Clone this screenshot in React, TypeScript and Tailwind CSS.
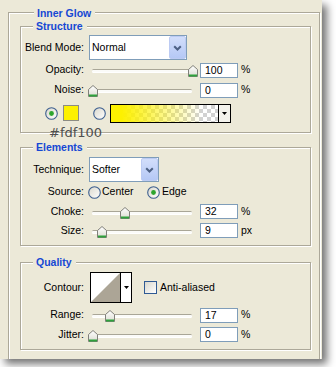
import React from "react";

function Legend({ children, className = "" }: { children: React.ReactNode; className?: string }) {
  return (
    <div
      className={`-mt-[8px] w-fit pl-[3px] pr-[4px] bg-[#ece9d8] text-[10.5px] font-bold leading-[14px] text-[#1548d4] ${className}`}
    >
      {children}
    </div>
  );
}

function Label({ children }: { children: React.ReactNode }) {
  return <div className="w-[63px] shrink-0 text-right text-[10.5px] text-black">{children}</div>;
}

function Thumb() {
  return (
    <svg width="10" height="12" viewBox="0 0 10 12">
      <defs>
        <linearGradient id="thumbg" x1="0" y1="0" x2="0" y2="1">
          <stop offset="0" stopColor="#ffffff" />
          <stop offset="1" stopColor="#dcdcd2" />
        </linearGradient>
      </defs>
      <path d="M0.5 4.5 L5 0.5 L9.5 4.5 V11.5 H0.5 Z" fill="url(#thumbg)" stroke="#80807a" />
      <rect x="1" y="9.5" width="8" height="2" fill="#2fa13c" />
    </svg>
  );
}

function Slider({ x }: { x: number }) {
  return (
    <div className="relative ml-[3px] h-full w-[110px] shrink-0">
      <div className="absolute left-[5px] right-[5px] top-[9px] h-[3px] rounded-full border-t border-[#a9a697] bg-[#fbfbf8] shadow-[0_1px_0_#ffffff]" />
      <div className="absolute top-[5px]" style={{ left: x - 87 }}>
        <Thumb />
      </div>
    </div>
  );
}

function Field({ value, unit }: { value: string; unit: string }) {
  return (
    <>
      <div className="ml-[3px] flex h-[15px] w-[38px] shrink-0 items-center border border-[#7f9db9] bg-white pl-[4px] text-[10.5px] leading-[13px] text-black">
        {value}
      </div>
      <div className="ml-[3px] text-[10.5px] text-black">{unit}</div>
    </>
  );
}

function Chevron() {
  return (
    <svg width="9" height="6" viewBox="0 0 9 6">
      <path d="M1.2 1.2 L4.5 4.5 L7.8 1.2" stroke="#4d6185" strokeWidth="2" fill="none" />
    </svg>
  );
}

function Select({ text, className }: { text: string; className: string }) {
  return (
    <div className={`ml-[5px] flex h-[25px] shrink-0 items-center border border-[#7f9db9] bg-white ${className}`}>
      <div className="pl-[2px] text-[10.5px] text-black">{text}</div>
      <div className="ml-auto flex h-[23px] w-[17px] items-center justify-center rounded-[2px] border border-[#bccbf3] bg-linear-to-b from-[#d2defb] to-[#b5c8f5]">
        <Chevron />
      </div>
    </div>
  );
}

function Radio({ checked }: { checked?: boolean }) {
  return (
    <svg width="13" height="13" viewBox="0 0 13 13" className="shrink-0">
      <defs>
        <linearGradient id="radiog" x1="0" y1="0" x2="1" y2="1">
          <stop offset="0" stopColor="#d9d7cc" />
          <stop offset="1" stopColor="#ffffff" />
        </linearGradient>
      </defs>
      <circle cx="6.5" cy="6.5" r="5.8" fill="url(#radiog)" stroke="#3d5f8f" strokeWidth="1.1" />
      {checked && <circle cx="6.5" cy="6.5" r="2.4" fill="#2ea52e" />}
    </svg>
  );
}

function DownTri() {
  return (
    <svg width="5" height="3" viewBox="0 0 5 3">
      <path d="M0 0 H5 L2.5 3 Z" fill="#000000" />
    </svg>
  );
}

const groupCls =
  "border border-[#aca899] shadow-[inset_1px_1px_0_#ffffff,1px_1px_0_#ffffff]";

export default function App() {
  return (
    <div className="h-[367px] w-[336px] overflow-hidden bg-white font-['Liberation_Sans',Arial,sans-serif]">
      <div className="h-[359px] w-[322px] overflow-hidden bg-[#ece9d8] pl-[8px] pt-[12px] shadow-[5px_5px_8px_rgba(0,0,0,0.55)]">
        <div className={`h-[360px] w-[312px] pl-[11px] pr-[8px] ${groupCls}`}>
          <Legend className="ml-[14px] pt-[1px]">Inner Glow</Legend>

          {/* Structure */}
          <div className={`relative mt-[6px] pb-[8px] ${groupCls}`}>
            <Legend className="ml-[12px]">Structure</Legend>
            <div className="mt-[2px] flex h-[25px] items-center">
              <Label>Blend Mode:</Label>
              <Select text="Normal" className="w-[98px]" />
            </div>
            <div className="flex h-[20px] items-center">
              <Label>Opacity:</Label>
              <Slider x={188} />
              <Field value="100" unit="%" />
            </div>
            <div className="flex h-[20px] items-center">
              <Label>Noise:</Label>
              <Slider x={88} />
              <Field value="0" unit="%" />
            </div>
            <div className="mt-[2px] flex h-[22px] items-center">
              <div className="ml-[24px]">
                <Radio checked />
              </div>
              <div className="ml-[5px] h-[16px] w-[16px] border border-[#8c8c84] bg-[#fdf100]" />
              <div className="ml-[14px]">
                <Radio />
              </div>
              <div className="ml-[4px] flex h-[19px] w-[121px] border border-black">
                <div className="flex-1 bg-[conic-gradient(#d2d2d2_25%,#ffffff_0_50%,#d2d2d2_0_75%,#ffffff_0)] bg-[length:8px_8px]">
                  <div className="h-full bg-linear-to-r from-[#fdf100] from-10% to-[rgba(253,241,0,0)] to-85%" />
                </div>
                <div className="flex w-[12px] items-center justify-center border-l border-black bg-[#f3f2ec]">
                  <DownTri />
                </div>
              </div>
            </div>
            <div className="absolute left-[28px] top-[99px] font-['DejaVu_Sans',sans-serif] text-[13px] leading-[13px] text-[#4e4e4e]">
              #fdf100
            </div>
          </div>

          {/* Elements */}
          <div className={`mt-[14px] pb-[5px] ${groupCls}`}>
            <Legend className="ml-[12px]">Elements</Legend>
            <div className="mt-[3px] flex h-[25px] items-center">
              <Label>Technique:</Label>
              <Select text="Softer" className="w-[70px]" />
            </div>
            <div className="flex h-[20px] items-center text-[10.5px] text-black">
              <Label>Source:</Label>
              <div className="ml-[4px] flex w-[59px] items-center">
                <Radio />
                <span className="ml-[1px]">Center</span>
              </div>
              <Radio checked />
              <span className="ml-[2px]">Edge</span>
            </div>
            <div className="flex h-[19px] items-center">
              <Label>Choke:</Label>
              <Slider x={120} />
              <Field value="32" unit="%" />
            </div>
            <div className="flex h-[19px] items-center">
              <Label>Size:</Label>
              <Slider x={97} />
              <Field value="9" unit="px" />
            </div>
          </div>

          {/* Quality */}
          <div className={`mt-[16px] pb-[5px] ${groupCls}`}>
            <Legend className="ml-[12px]">Quality</Legend>
            <div className="mt-[3px] flex h-[31px] items-center">
              <Label>Contour:</Label>
              <div className="ml-[6px] flex h-[31px] w-[42px] shrink-0 border border-black">
                <div className="h-full w-[29px] bg-white">
                  <svg width="29" height="29" viewBox="0 0 29 29">
                    <polygon points="0,29 29,0 29,29" fill="#aca596" />
                  </svg>
                </div>
                <div className="flex flex-1 items-center justify-center border-l border-black bg-white">
                  <DownTri />
                </div>
              </div>
              <div className="ml-[12px] h-[13px] w-[13px] shrink-0 border border-[#2f5a94] bg-linear-to-br from-[#d8d7cd] to-white" />
              <span className="ml-[3px] text-[10.5px] text-black">Anti-aliased</span>
            </div>
            <div className="mt-[2px] flex h-[20px] items-center">
              <Label>Range:</Label>
              <Slider x={105} />
              <Field value="17" unit="%" />
            </div>
            <div className="flex h-[19px] items-center">
              <Label>Jitter:</Label>
              <Slider x={88} />
              <Field value="0" unit="%" />
            </div>
          </div>
        </div>
      </div>
    </div>
  );
}
